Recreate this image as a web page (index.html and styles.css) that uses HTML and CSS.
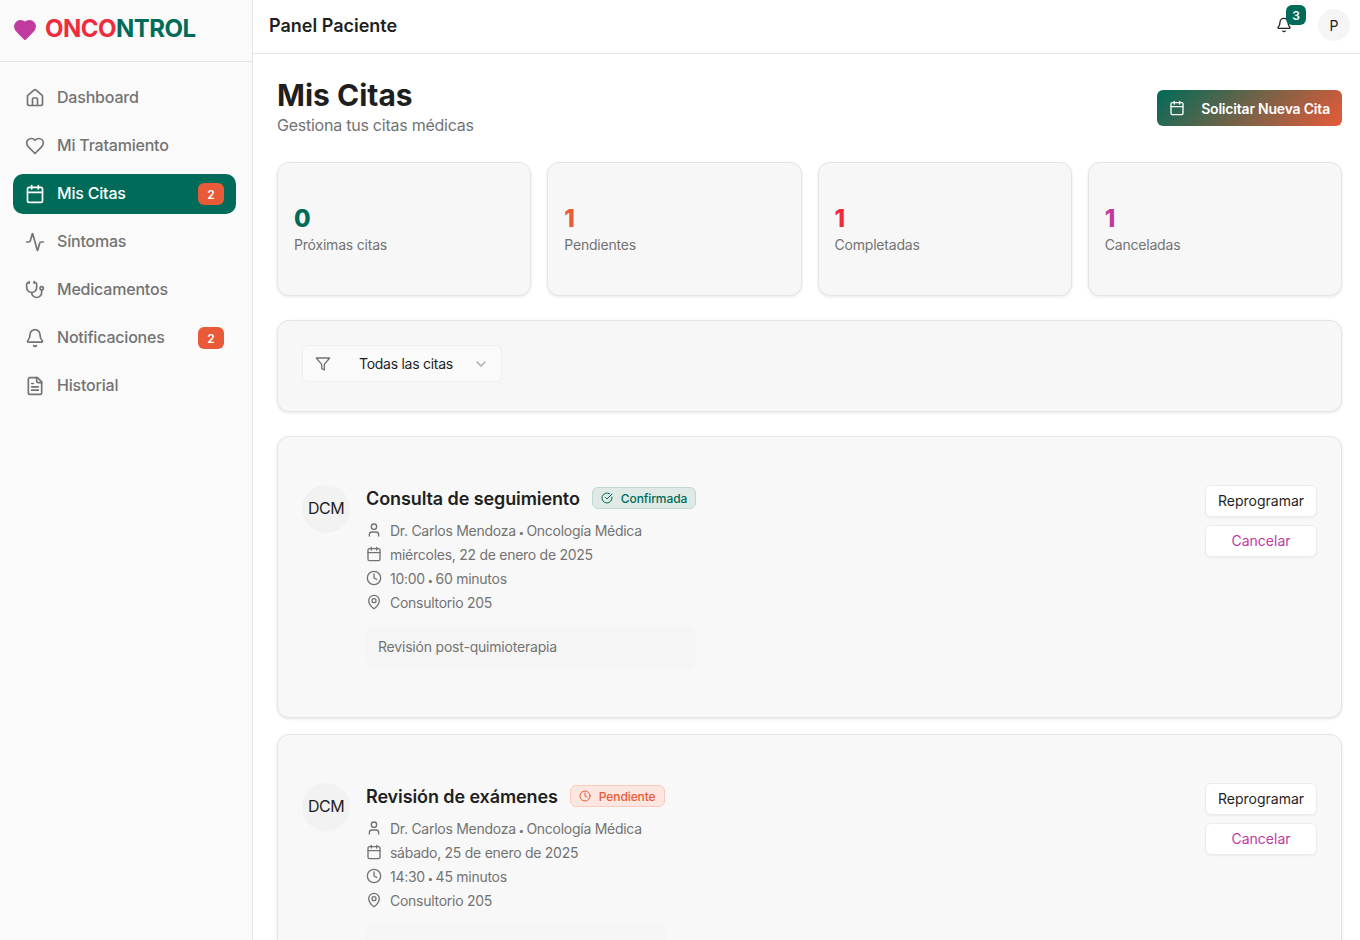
FILE: index.html
```html
<!DOCTYPE html>
<html lang="es">
<head>
    <meta charset="UTF-8">
    <title>Mis Citas - Oncontrol</title>
    <link rel="stylesheet" href="styles.css">
</head>
<body>

    <svg class="sprite" xmlns="http://www.w3.org/2000/svg">
        <symbol id="i-house" viewBox="0 0 24 24"><path d="M15 21v-8a1 1 0 0 0-1-1h-4a1 1 0 0 0-1 1v8"/><path d="M3 10a2 2 0 0 1 .709-1.528l7-5.999a2 2 0 0 1 2.582 0l7 5.999A2 2 0 0 1 21 10v9a2 2 0 0 1-2 2H5a2 2 0 0 1-2-2z"/></symbol>
        <symbol id="i-heart" viewBox="0 0 24 24"><path d="M19 14c1.49-1.46 3-3.21 3-5.5A5.5 5.5 0 0 0 16.5 3c-1.76 0-3 .5-4.5 2-1.5-1.5-2.74-2-4.5-2A5.5 5.5 0 0 0 2 8.5c0 2.3 1.5 4.05 3 5.5l7 7Z"/></symbol>
        <symbol id="i-calendar" viewBox="0 0 24 24"><path d="M8 2v4"/><path d="M16 2v4"/><rect width="18" height="18" x="3" y="4" rx="2"/><path d="M3 10h18"/></symbol>
        <symbol id="i-activity" viewBox="0 0 24 24"><path d="M22 12h-2.48a2 2 0 0 0-1.93 1.46l-2.35 8.36a.25.25 0 0 1-.48 0L9.24 2.18a.25.25 0 0 0-.48 0l-2.35 8.36A2 2 0 0 1 4.49 12H2"/></symbol>
        <symbol id="i-stethoscope" viewBox="0 0 24 24"><path d="M11 2v2"/><path d="M5 2v2"/><path d="M5 3H4a2 2 0 0 0-2 2v4a6 6 0 0 0 12 0V5a2 2 0 0 0-2-2h-1"/><path d="M8 15a6 6 0 0 0 12 0v-3"/><circle cx="20" cy="10" r="2"/></symbol>
        <symbol id="i-bell" viewBox="0 0 24 24"><path d="M10.268 21a2 2 0 0 0 3.464 0"/><path d="M3.262 15.326A1 1 0 0 0 4 17h16a1 1 0 0 0 .74-1.673C19.41 13.956 18 12.499 18 8A6 6 0 0 0 6 8c0 4.499-1.411 5.956-2.738 7.326"/></symbol>
        <symbol id="i-file" viewBox="0 0 24 24"><path d="M15 2H6a2 2 0 0 0-2 2v16a2 2 0 0 0 2 2h12a2 2 0 0 0 2-2V7Z"/><path d="M14 2v4a2 2 0 0 0 2 2h4"/><path d="M10 9H8"/><path d="M16 13H8"/><path d="M16 17H8"/></symbol>
        <symbol id="i-funnel" viewBox="0 0 24 24"><polygon points="22 3 2 3 10 12.46 10 19 14 21 14 12.46 22 3"/></symbol>
        <symbol id="i-chevron" viewBox="0 0 24 24"><path d="m6 9 6 6 6-6"/></symbol>
        <symbol id="i-user" viewBox="0 0 24 24"><path d="M19 21v-2a4 4 0 0 0-4-4H9a4 4 0 0 0-4 4v2"/><circle cx="12" cy="7" r="4"/></symbol>
        <symbol id="i-clock" viewBox="0 0 24 24"><circle cx="12" cy="12" r="10"/><polyline points="12 6 12 12 16 14"/></symbol>
        <symbol id="i-pin" viewBox="0 0 24 24"><path d="M20 10c0 4.993-5.539 10.193-7.399 11.799a1 1 0 0 1-1.202 0C9.539 20.193 4 14.993 4 10a8 8 0 0 1 16 0"/><circle cx="12" cy="10" r="3"/></symbol>
        <symbol id="i-check" viewBox="0 0 24 24"><path d="M21.801 10A10 10 0 1 1 17 3.335"/><path d="m9 11 3 3L22 4"/></symbol>
    </svg>

    <aside class="sidebar">
        <div class="brand">
            <svg class="brand-heart" viewBox="0 0 24 24"><use href="#i-heart"/></svg>
            <span class="brand-name"><span class="brand-a">ONCO</span><span class="brand-b">NTROL</span></span>
        </div>
        <nav class="nav">
            <a class="nav-item"><svg class="icon icon-20"><use href="#i-house"/></svg><span>Dashboard</span></a>
            <a class="nav-item"><svg class="icon icon-20"><use href="#i-heart"/></svg><span>Mi Tratamiento</span></a>
            <a class="nav-item active"><svg class="icon icon-20"><use href="#i-calendar"/></svg><span>Mis Citas</span><b class="nav-badge">2</b></a>
            <a class="nav-item"><svg class="icon icon-20"><use href="#i-activity"/></svg><span>Síntomas</span></a>
            <a class="nav-item"><svg class="icon icon-20"><use href="#i-stethoscope"/></svg><span>Medicamentos</span></a>
            <a class="nav-item"><svg class="icon icon-20"><use href="#i-bell"/></svg><span>Notificaciones</span><b class="nav-badge">2</b></a>
            <a class="nav-item"><svg class="icon icon-20"><use href="#i-file"/></svg><span>Historial</span></a>
        </nav>
    </aside>

    <div class="page">
        <header class="topbar">
            <h2 class="topbar-title">Panel Paciente</h2>
            <div class="topbar-right">
                <div class="bell">
                    <svg class="icon icon-16"><use href="#i-bell"/></svg>
                    <b class="bell-count">3</b>
                </div>
                <div class="user-avatar">P</div>
            </div>
        </header>

        <main class="content">
            <div class="page-head">
                <div>
                    <h1>Mis Citas</h1>
                    <p class="subtitle">Gestiona tus citas médicas</p>
                </div>
                <button class="btn-new"><svg class="icon icon-16"><use href="#i-calendar"/></svg>Solicitar Nueva Cita</button>
            </div>

            <section class="stats">
                <div class="card stat"><div class="stat-num green">0</div><div class="stat-label">Próximas citas</div></div>
                <div class="card stat"><div class="stat-num orange">1</div><div class="stat-label">Pendientes</div></div>
                <div class="card stat"><div class="stat-num red">1</div><div class="stat-label">Completadas</div></div>
                <div class="card stat"><div class="stat-num magenta">1</div><div class="stat-label">Canceladas</div></div>
            </section>

            <section class="card filter-card">
                <div class="select">
                    <svg class="icon icon-16 select-icon"><use href="#i-funnel"/></svg>
                    <span class="select-text">Todas las citas</span>
                    <svg class="icon icon-16 select-chevron"><use href="#i-chevron"/></svg>
                </div>
            </section>

            <article class="card appt">
                <div class="appt-avatar">DCM</div>
                <div class="appt-body">
                    <div class="appt-title">
                        <h3>Consulta de seguimiento</h3>
                        <span class="status confirmed"><svg class="icon icon-12"><use href="#i-check"/></svg>Confirmada</span>
                    </div>
                    <ul class="appt-info">
                        <li><svg class="icon icon-16"><use href="#i-user"/></svg><span>Dr. Carlos Mendoza <i class="sep">•</i> Oncología Médica</span></li>
                        <li><svg class="icon icon-16"><use href="#i-calendar"/></svg><span>miércoles, 22 de enero de 2025</span></li>
                        <li><svg class="icon icon-16"><use href="#i-clock"/></svg><span>10:00 <i class="sep">•</i> 60 minutos</span></li>
                        <li><svg class="icon icon-16"><use href="#i-pin"/></svg><span>Consultorio 205</span></li>
                    </ul>
                    <div class="appt-note">Revisión post-quimioterapia</div>
                </div>
                <div class="appt-actions">
                    <button class="btn-outline">Reprogramar</button>
                    <button class="btn-outline danger">Cancelar</button>
                </div>
            </article>

            <article class="card appt">
                <div class="appt-avatar">DCM</div>
                <div class="appt-body">
                    <div class="appt-title">
                        <h3>Revisión de exámenes</h3>
                        <span class="status pending"><svg class="icon icon-12"><use href="#i-clock"/></svg>Pendiente</span>
                    </div>
                    <ul class="appt-info">
                        <li><svg class="icon icon-16"><use href="#i-user"/></svg><span>Dr. Carlos Mendoza <i class="sep">•</i> Oncología Médica</span></li>
                        <li><svg class="icon icon-16"><use href="#i-calendar"/></svg><span>sábado, 25 de enero de 2025</span></li>
                        <li><svg class="icon icon-16"><use href="#i-clock"/></svg><span>14:30 <i class="sep">•</i> 45 minutos</span></li>
                        <li><svg class="icon icon-16"><use href="#i-pin"/></svg><span>Consultorio 205</span></li>
                    </ul>
                    <div class="appt-note"></div>
                </div>
                <div class="appt-actions">
                    <button class="btn-outline">Reprogramar</button>
                    <button class="btn-outline danger">Cancelar</button>
                </div>
            </article>
        </main>
    </div>

</body>
</html>
```

FILE: styles.css
```css
* {
    box-sizing: border-box;
}

html, body {
    height: 100%;
    overflow: hidden;
}

body {
    margin: 0;
    display: flex;
    font-family: 'Inter', 'Noto Sans', sans-serif;
    background-color: #fff;
    color: #1f1f1f;
}

.sprite {
    display: none;
}

.icon {
    fill: none;
    stroke: currentColor;
    stroke-width: 2;
    stroke-linecap: round;
    stroke-linejoin: round;
    flex-shrink: 0;
}

.icon-20 { width: 20px; height: 20px; }
.icon-16 { width: 16px; height: 16px; }
.icon-12 { width: 12px; height: 12px; }

/* sidebar */
.sidebar {
    width: 253px;
    flex-shrink: 0;
    background-color: #fafafa;
    border-right: 1px solid #e5e5e5;
}

.brand {
    height: 62px;
    display: flex;
    align-items: center;
    gap: 8px;
    padding: 0 13px 4px 13px;
    border-bottom: 1px solid #e5e5e5;
}

.brand-heart {
    width: 24px;
    height: 24px;
    margin-top: 2px;
    fill: #c13a9f;
    stroke: #c13a9f;
    stroke-width: 2;
    stroke-linejoin: round;
}

.brand-name {
    font-size: 24px;
    font-weight: 700;
    letter-spacing: -0.5px;
}

.brand-a { color: #ef2b3c; }
.brand-b { color: #006b58; }

.nav {
    display: flex;
    flex-direction: column;
    gap: 8px;
    padding: 16px 16px 16px 13px;
}

.nav-item {
    height: 40px;
    display: flex;
    align-items: center;
    gap: 12px;
    padding: 0 12px;
    border-radius: 10px;
    font-size: 16px;
    font-weight: 500;
    letter-spacing: -0.2px;
    color: #737373;
}

.nav-item span {
    flex: 1;
    padding-bottom: 2px;
}

.nav-item.active {
    background-color: #006b58;
    color: #fff;
}

.nav-badge {
    width: 26px;
    height: 22px;
    display: flex;
    align-items: center;
    justify-content: center;
    border-radius: 6px;
    background-color: #e85a38;
    color: #fff;
    font-size: 12px;
    font-weight: 600;
}

/* topbar */
.page {
    flex: 1;
    min-width: 0;
    display: flex;
    flex-direction: column;
}

.topbar {
    height: 54px;
    flex-shrink: 0;
    display: flex;
    align-items: center;
    justify-content: space-between;
    padding: 0 10px 3px 16px;
    border-bottom: 1px solid #e5e5e5;
}

.topbar-title {
    margin: 0;
    font-size: 18px;
    font-weight: 600;
}

.topbar-right {
    display: flex;
    align-items: center;
    gap: 26px;
}

.bell {
    position: relative;
    display: flex;
    color: #1f1f1f;
}

.bell-count {
    position: absolute;
    top: -12px;
    left: 10px;
    width: 20px;
    height: 20px;
    display: flex;
    align-items: center;
    justify-content: center;
    border-radius: 6px;
    background-color: #006b58;
    color: #fff;
    font-size: 12px;
    font-weight: 600;
}

.user-avatar {
    width: 32px;
    height: 32px;
    display: flex;
    align-items: center;
    justify-content: center;
    border-radius: 50%;
    background-color: #f5f5f5;
    font-size: 14px;
}

/* content */
.content {
    flex: 1;
    overflow: hidden;
    display: flex;
    flex-direction: column;
    gap: 16px;
    padding: 24px 18px 0 24px;
}

.content > * {
    flex-shrink: 0;
}

.page-head {
    display: flex;
    align-items: center;
    justify-content: space-between;
    height: 60px;
    margin-bottom: 8px;
}

.page-head > div {
    margin-top: -2px;
}

h1 {
    margin: 0;
    font-size: 30px;
    line-height: 36px;
    font-weight: 700;
}

.subtitle {
    margin: 0;
    font-size: 16px;
    line-height: 24px;
    letter-spacing: -0.24px;
    color: #737373;
}

.btn-new {
    height: 36px;
    display: flex;
    align-items: center;
    gap: 16px;
    padding: 0 12px;
    border: none;
    border-radius: 6px;
    background: linear-gradient(135deg, #006b58, #e85a38);
    color: #fff;
    font-family: inherit;
    font-size: 14px;
    font-weight: 600;
    letter-spacing: -0.2px;
}

.card {
    background-color: #f7f7f7;
    border: 1px solid #e5e5e5;
    border-radius: 12px;
    box-shadow: 0 1px 3px rgba(0,0,0,0.1);
}

.stats {
    display: grid;
    grid-template-columns: repeat(4, 1fr);
    gap: 16px;
    margin-bottom: 8px;
}

.stat {
    height: 134px;
    display: flex;
    flex-direction: column;
    justify-content: center;
    padding: 0 16px;
}

.stat-num {
    font-size: 24px;
    line-height: 32px;
    font-weight: 800;
}

.stat-label {
    font-size: 14px;
    line-height: 20px;
    letter-spacing: -0.2px;
    color: #737373;
}

.green { color: #006b58; }
.orange { color: #e85a38; }
.red { color: #ef2b3c; }
.magenta { color: #c13a9f; }

.filter-card {
    height: 92px;
    padding: 24px;
    margin-bottom: 8px;
}

.select {
    width: 200px;
    height: 37px;
    display: flex;
    align-items: center;
    padding: 0 12px;
    background-color: #fafafa;
    border: 1px solid #efefef;
    border-radius: 6px;
}

.select-icon {
    color: #737373;
}

.select-text {
    flex: 1;
    margin-left: 28px;
    font-size: 14px;
    letter-spacing: -0.27px;
}

.select-chevron {
    color: #a8a8a8;
}

/* appointments */
.appt {
    height: 282px;
    display: flex;
    gap: 16px;
    padding: 48px 24px;
    background-color: #f8f8f8;
}

.appt-avatar {
    width: 48px;
    height: 48px;
    flex-shrink: 0;
    display: flex;
    align-items: center;
    justify-content: center;
    padding-bottom: 2px;
    border-radius: 50%;
    background-color: #f2f2f2;
    font-size: 16px;
    letter-spacing: -0.5px;
}

.appt-body {
    width: fit-content;
}

.appt-title {
    display: flex;
    align-items: center;
    gap: 12px;
    height: 26px;
    margin-bottom: 7px;
}

.appt-title h3 {
    margin: 0;
    font-size: 18px;
    font-weight: 600;
    letter-spacing: -0.1px;
}

.status {
    height: 22px;
    display: flex;
    align-items: center;
    gap: 8px;
    padding: 0 8px;
    border: 1px solid;
    border-radius: 6px;
    font-size: 12px;
    font-weight: 500;
    letter-spacing: -0.1px;
}

.confirmed {
    color: #006b58;
    background-color: #dfe9e6;
    border-color: #bfd9d2;
}

.pending {
    color: #e85a38;
    background-color: #fbe6e1;
    border-color: #f8c9bc;
}

.appt-info {
    margin: 0;
    padding: 0;
    list-style: none;
}

.appt-info li {
    height: 24px;
    display: flex;
    align-items: center;
    gap: 8px;
    font-size: 14px;
    letter-spacing: -0.27px;
    color: #737373;
}

.sep {
    font-style: normal;
    font-size: 10px;
    margin: 0 -1px;
}

.appt-note {
    height: 44px;
    margin-top: 11px;
    padding: 12px;
    background-color: #f5f5f5;
    border-radius: 8px;
    font-size: 14px;
    line-height: 20px;
    letter-spacing: -0.2px;
    color: #737373;
}

.appt-actions {
    width: 112px;
    margin-left: auto;
    display: flex;
    flex-direction: column;
    gap: 8px;
}

.btn-outline {
    height: 32px;
    padding: 0 0 2px;
    background-color: #fff;
    border: 1px solid #ececec;
    border-radius: 6px;
    box-shadow: 0 1px 2px rgba(0,0,0,0.05);
    font-family: inherit;
    font-size: 14px;
    color: #1f1f1f;
}

.btn-outline.danger {
    color: #c13a9f;
}
```
